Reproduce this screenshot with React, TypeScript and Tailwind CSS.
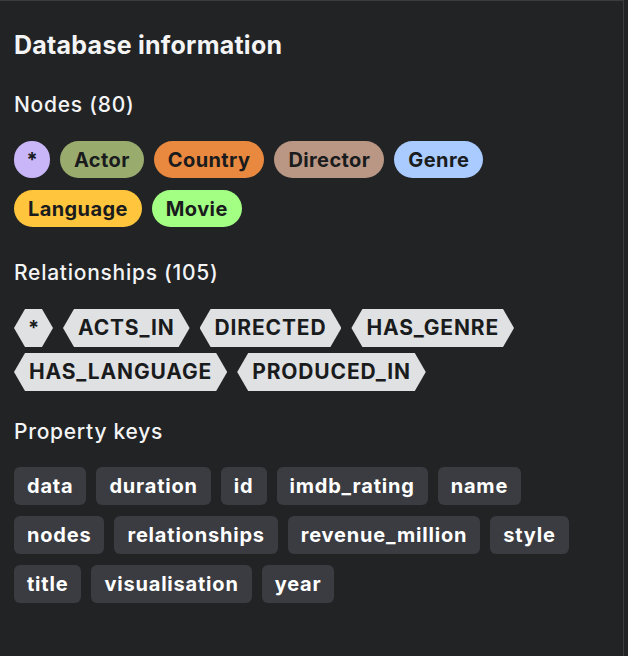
import React from 'react';

const nodeLabels = [
  { label: '*', color: 'bg-[#c9b6f8]', round: true },
  { label: 'Actor', color: 'bg-[#9aab6e]' },
  { label: 'Country', color: 'bg-[#e8893f]' },
  { label: 'Director', color: 'bg-[#b99784]' },
  { label: 'Genre', color: 'bg-[#a9cbff]' },
  { label: 'Language', color: 'bg-[#ffc53d]' },
  { label: 'Movie', color: 'bg-[#a3ff83]' },
];

const relTypes = ['*', 'ACTS_IN', 'DIRECTED', 'HAS_GENRE', 'HAS_LANGUAGE', 'PRODUCED_IN'];

const propKeys = [
  'data',
  'duration',
  'id',
  'imdb_rating',
  'name',
  'nodes',
  'relationships',
  'revenue_million',
  'style',
  'title',
  'visualisation',
  'year',
];

const hexClip = 'polygon(11px 0, calc(100% - 11px) 0, 100% 50%, calc(100% - 11px) 100%, 11px 100%, 0 50%)';

function SectionTitle({ children, className }: { children: React.ReactNode; className?: string }) {
  return (
    <h3 className={`text-[21px] leading-[28px] font-medium tracking-[0.035em] text-[#f4f4f5] ${className ?? ''}`}>
      {children}
    </h3>
  );
}

export default function App() {
  return (
    <div className="min-h-[656px] w-[628px] bg-[#212325] font-['Inter','Noto_Sans',sans-serif]">
      <div className="w-[624px] min-h-[656px] border-t border-r border-[#3a3c40] px-[14px] pt-[28px]">
        <h2 className="text-[25px] leading-[32px] font-bold tracking-[0.01em] text-[#f4f4f5]">Database information</h2>

        <SectionTitle className="mt-[30px]">Nodes (80)</SectionTitle>
        <div className="mt-[22px] flex flex-wrap gap-x-[10px] gap-y-[12px]">
          {nodeLabels.map((n) => (
            <span
              key={n.label}
              className={`${n.color} h-[37px] rounded-full flex items-center justify-center text-[20px] font-bold text-[#1a1b1d] ${
                n.round ? 'w-[36px]' : 'px-[14px] tracking-[0.02em]'
              }`}
            >
              {n.label}
            </span>
          ))}
        </div>

        <SectionTitle className="mt-[32px]">Relationships (105)</SectionTitle>
        <div className="mt-[22px] flex flex-wrap gap-x-[10px] gap-y-[6px]">
          {relTypes.map((r) => (
            <span
              key={r}
              style={{ clipPath: hexClip }}
              className={`bg-[#e0e1e3] h-[38px] flex items-center justify-center font-bold text-[#1a1b1d] ${
                r === '*' ? 'w-[39px] text-[20px]' : 'px-[15px] text-[21px] tracking-[0.04em]'
              }`}
            >
              {r}
            </span>
          ))}
        </div>

        <SectionTitle className="mt-[27px]">Property keys</SectionTitle>
        <div className="mt-[21px] flex flex-wrap gap-x-[10px] gap-y-[11px]">
          {propKeys.map((k) => (
            <span
              key={k}
              className="bg-[#3a3c41] h-[38px] rounded-[6px] px-[13px] flex items-center text-[20px] font-bold tracking-[0.04em] text-white"
            >
              {k}
            </span>
          ))}
        </div>
      </div>
    </div>
  );
}
